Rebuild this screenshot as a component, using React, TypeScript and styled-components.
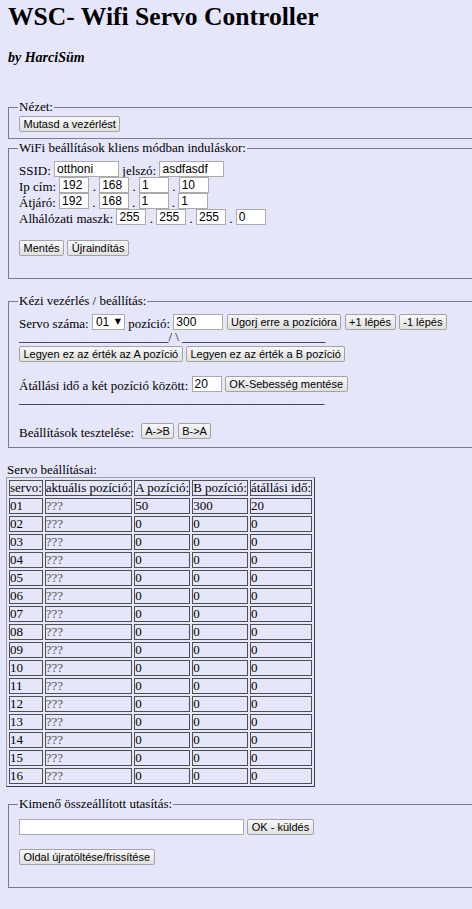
import styled, { createGlobalStyle } from "styled-components";

const GlobalStyle = createGlobalStyle`
  html {
    overflow-x: hidden;
    background: #e6e6fa;
  }
  body {
    margin: 0;
    padding: 0 6px;
    background: #e6e6fa;
    color: #000;
    font-family: "Liberation Serif", "Times New Roman", serif;
    font-size: 13px;
  }
`;

const Page = styled.div`
  width: 900px;
`;

const Title = styled.h1`
  margin: 2px 0 0 2px;
  font-size: 25.6px;
  line-height: 29px;
  font-weight: bold;
`;

const Byline = styled.h4`
  margin: 19px 0 0 2px;
  font-size: 14px;
  line-height: 16px;
  font-weight: bold;
  font-style: italic;
`;

const Panel = styled.fieldset<{ $top: number; $bottom: number }>`
  margin: ${(p) => p.$top}px 2px 0;
  padding: 0 10px ${(p) => p.$bottom}px;
  border: 1px solid #7c7c88;
  min-width: 0;
`;

const Legend = styled.legend`
  padding: 0 1px 2px;
  margin-left: -1px;
  font-size: 13px;
  line-height: 15px;
`;

// one line of text and controls; the text sits low, near the boxes' bottom edge
const Row = styled.div<{ $top?: number }>`
  box-sizing: border-box;
  margin-top: ${(p) => p.$top ?? 0}px;
  padding-top: 3px;
  height: 16px;
  line-height: 13px;
  white-space: nowrap;
`;

const Rule = styled.div`
  height: 13px;
  line-height: 13px;
  white-space: nowrap;
`;

const Btn = styled.button`
  box-sizing: border-box;
  height: 16px;
  margin: -3px 0 0;
  padding: 0 3.5px;
  vertical-align: top;
  font-family: "Liberation Sans", Arial, sans-serif;
  font-size: 11px;
  line-height: 14px;
  color: #000;
  background: linear-gradient(#f8f8f8, #e0e0e0);
  border: 1px solid #a3a3a3;
  border-radius: 2px;
`;

const Field = styled.input<{ $w: number }>`
  box-sizing: border-box;
  width: ${(p) => p.$w}px;
  height: 16px;
  margin: -3px 0 0;
  padding: 0 2px;
  vertical-align: top;
  font-family: "Liberation Sans", Arial, sans-serif;
  font-size: 12px;
  color: #000;
  background: #fff;
  border: 1px solid #ababab;
  outline: none;
`;

const SelectWrap = styled.span`
  position: relative;
  display: inline-block;
  margin-top: -3px;
  vertical-align: top;
`;

const Select = styled.select`
  box-sizing: border-box;
  width: 33px;
  height: 16px;
  margin: 0;
  padding: 0 0 0 3px;
  appearance: none;
  font-family: "Liberation Sans", Arial, sans-serif;
  font-size: 12px;
  color: #000;
  background: #fff;
  border: 1px solid #ababab;
  border-radius: 0;
  display: block;
`;

const Arrow = styled.span`
  position: absolute;
  top: 0;
  right: 4px;
  font-family: "DejaVu Sans", sans-serif;
  font-size: 8px;
  line-height: 16px;
  pointer-events: none;
`;

const Caption = styled.div`
  margin: 15px 0 0 1px;
  line-height: 14px;
`;

const Grid = styled.table`
  border-collapse: separate;
  border-spacing: 2px;
  border: 1px solid;
  border-color: #9c9cab #3c3c3c #3c3c3c #9c9cab;
`;

const Cell = styled.td<{ $dim?: boolean }>`
  padding: 0;
  border: 1px solid #4f4f4f;
  line-height: 14px;
  font-size: 13px;
  white-space: nowrap;
  color: ${(p) => (p.$dim ? "#555555" : "#000")};
`;

type Servo = { a: number; b: number; t: number };

const servos: Servo[] = Array.from({ length: 16 }, (_, i) =>
  i === 0 ? { a: 50, b: 300, t: 20 } : { a: 0, b: 0, t: 0 }
);

const pad = (n: number) => String(n).padStart(2, "0");

// four small boxes joined by dots, as an IP address
function Quad({ label, parts }: { label: string; parts: string[] }) {
  return (
    <Row>
      {label}{" "}
      {parts.map((v, i) => (
        <span key={i}>
          {i > 0 && " . "}
          <Field $w={30} defaultValue={v} />
        </span>
      ))}
    </Row>
  );
}

export default function App() {
  return (
    <Page>
      <GlobalStyle />
      <Title>WSC- Wifi Servo Controller</Title>
      <Byline>by HarciSüm</Byline>

      <Panel $top={33} $bottom={6}>
        <Legend>Nézet:</Legend>
        <Row $top={0}>
          <Btn>Mutasd a vezérlést</Btn>
        </Row>
      </Panel>

      <Panel $top={1} $bottom={22}>
        <Legend>WiFi beállítások kliens módban induláskor:</Legend>
        <Row $top={4}>
          SSID: <Field $w={65} defaultValue="otthoni" /> jelszó: <Field $w={65} defaultValue="asdfasdf" />
        </Row>
        <Quad label="Ip cím:" parts={["192", "168", "1", "10"]} />
        <Quad label="Átjáró:" parts={["192", "168", "1", "1"]} />
        <Quad label="Alhálózati maszk:" parts={["255", "255", "255", "0"]} />
        <Row $top={15}>
          <Btn>Mentés</Btn> <Btn>Újraindítás</Btn>
        </Row>
      </Panel>

      <Panel $top={14} $bottom={8}>
        <Legend>Kézi vezérlés / beállítás:</Legend>
        <Row $top={4}>
          Servo száma:{" "}
          <SelectWrap>
            <Select defaultValue="01">
              {servos.map((_, i) => (
                <option key={i}>{pad(i + 1)}</option>
              ))}
            </Select>
            <Arrow>▼</Arrow>
          </SelectWrap>{" "}
          pozíció: <Field $w={50} defaultValue="300" /> <Btn>Ugorj erre a pozícióra</Btn> <Btn>+1 lépés</Btn> <Btn>-1 lépés</Btn>
        </Row>
        <Rule>
          {"_".repeat(23)}/ \ {"_".repeat(22)}
        </Rule>
        <Row $top={3}>
          <Btn>Legyen ez az érték az A pozíció</Btn> <Btn>Legyen ez az érték a B pozíció</Btn>
        </Row>
        <Row $top={14}>
          Átállási idő a két pozíció között: <Field $w={30} defaultValue="20" /> <Btn>OK-Sebesség mentése</Btn>
        </Row>
        <Rule>{"_".repeat(47)}</Rule>
        <Row $top={18}>
          Beállítások tesztelése:&nbsp; <Btn>A-&gt;B</Btn> <Btn>B-&gt;A</Btn>
        </Row>
      </Panel>

      <Caption>Servo beállításai:</Caption>
      <Grid>
        <tbody>
          <tr>
            <Cell>servo:</Cell>
            <Cell>aktuális pozíció:</Cell>
            <Cell>A pozíció:</Cell>
            <Cell>B pozíció:</Cell>
            <Cell>átállási idő:</Cell>
          </tr>
          {servos.map((s, i) => (
            <tr key={i}>
              <Cell>{pad(i + 1)}</Cell>
              <Cell $dim>???</Cell>
              <Cell>{s.a}</Cell>
              <Cell>{s.b}</Cell>
              <Cell>{s.t}</Cell>
            </tr>
          ))}
        </tbody>
      </Grid>

      <Panel $top={9} $bottom={22}>
        <Legend>Kimenő összeállított utasítás:</Legend>
        <Row $top={6}>
          <Field $w={225} /> <Btn>OK - küldés</Btn>
        </Row>
        <Row $top={14}>
          <Btn>Oldal újratöltése/frissítése</Btn>
        </Row>
      </Panel>
    </Page>
  );
}
